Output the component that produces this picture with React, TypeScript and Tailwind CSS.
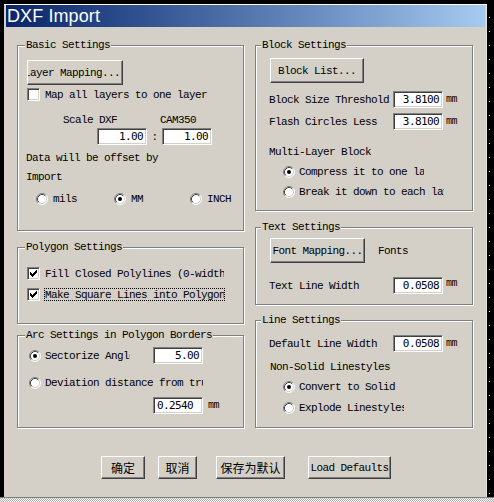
import React from "react";

const T =
  "font-['Liberation_Mono',monospace] text-[11px] tracking-[-0.6px] text-black leading-[12px] whitespace-nowrap";
const N =
  "font-['DejaVu_Sans_Mono',monospace] text-[11px] tracking-[-0.6px] text-black leading-[12px] whitespace-nowrap";
const CJK =
  "font-['Noto_Sans_CJK_SC','Noto_Sans_CJK_JP',sans-serif] text-[12px] leading-[14px] text-black whitespace-nowrap";

function Group({
  cls,
  legend,
  legendCls,
  children,
}: {
  cls: string;
  legend: string;
  legendCls: string;
  children?: React.ReactNode;
}) {
  return (
    <div
      className={`relative shrink-0 border border-[#808080] shadow-[inset_1px_1px_0_#fff,1px_1px_0_#fff] ${cls}`}
    >
      <span className={`absolute top-[-7px] px-[1px] bg-[#d4d0c8] ${T} ${legendCls}`}>
        {legend}
      </span>
      {children}
    </div>
  );
}

function Check({ checked }: { checked?: boolean }) {
  return (
    <span className="w-[13px] h-[13px] shrink-0 bg-white border border-t-[#808080] border-l-[#808080] border-b-white border-r-white shadow-[inset_1px_1px_0_#404040,inset_-1px_-1px_0_#d4d0c8] flex items-center justify-center">
      {checked && (
        <svg width="7" height="7" viewBox="0 0 7 7" shapeRendering="crispEdges">
          <rect x="0" y="2" width="1" height="3" fill="#000" />
          <rect x="1" y="3" width="1" height="3" fill="#000" />
          <rect x="2" y="4" width="1" height="3" fill="#000" />
          <rect x="3" y="3" width="1" height="3" fill="#000" />
          <rect x="4" y="2" width="1" height="3" fill="#000" />
          <rect x="5" y="1" width="1" height="3" fill="#000" />
          <rect x="6" y="0" width="1" height="3" fill="#000" />
        </svg>
      )}
    </span>
  );
}

function Radio({ checked, cls = "" }: { checked?: boolean; cls?: string }) {
  return (
    <svg width="12" height="12" viewBox="0 0 12 12" className={`block shrink-0 ${cls}`}>
      <circle cx="6" cy="6" r="5" fill="#fff" />
      <path d="M2.11 9.89A5.5 5.5 0 0 1 9.89 2.11" stroke="#808080" fill="none" />
      <path d="M9.89 2.11A5.5 5.5 0 0 1 2.11 9.89" stroke="#fff" fill="none" />
      <path d="M2.82 9.18A4.5 4.5 0 0 1 9.18 2.82" stroke="#404040" fill="none" />
      <path d="M9.18 2.82A4.5 4.5 0 0 1 2.82 9.18" stroke="#d4d0c8" fill="none" />
      {checked && <circle cx="6" cy="6" r="2" fill="#000" />}
    </svg>
  );
}

function Field({ v, cls }: { v: string; cls: string }) {
  return (
    <div
      className={`h-[17px] shrink-0 bg-white border border-t-[#808080] border-l-[#808080] border-b-white border-r-white shadow-[inset_1px_1px_0_#404040,inset_-1px_-1px_0_#d4d0c8] flex items-center ${N} ${cls}`}
    >
      {v}
    </div>
  );
}

function Btn({ children, cls }: { children: React.ReactNode; cls: string }) {
  return (
    <div
      className={`shrink-0 border border-t-white border-l-white border-b-[#404040] border-r-[#404040] shadow-[inset_-1px_-1px_0_#808080] bg-[#d4d0c8] flex items-center overflow-hidden ${cls}`}
    >
      {children}
    </div>
  );
}

function Mm({ cls }: { cls: string }) {
  return (
    <span
      className={`block font-['Liberation_Mono',monospace] text-[10px] tracking-[-0.5px] leading-[12px] text-[#000000] ${cls}`}
    >
      mm
    </span>
  );
}

export default function App() {
  return (
    <div className="w-[494px] h-[502px] bg-black flex flex-col overflow-hidden">
      <div className="flex h-[497px] pt-[4px] pl-[4px]">
        {/* window */}
        <div className="w-[483px] h-[493px] bg-[#d4d0c8] border-t border-t-white border-r border-r-[#e4e2dc] pl-[2px] pr-[1px] flex flex-col">
          {/* title bar */}
          <div className="h-[22px] shrink-0 bg-gradient-to-r from-[#0a246a] to-[#a6caf0] flex items-center pl-[1px]">
            <span className="font-['Liberation_Sans',Arial,sans-serif] text-[18px] leading-[20px] text-white tracking-[0.1px]">
              DXF Import
            </span>
          </div>

          {/* body */}
          <div className="flex pl-[11px] mt-[18px]">
            {/* left column */}
            <div className="flex flex-col w-[227px]">
              <Group cls="h-[186px]" legend="Basic Settings" legendCls="left-[7px]">
                <div className="flex flex-col pl-[9px] pt-[14px]">
                  <Btn cls="w-[96px] h-[25px] justify-end pr-[2px]">
                    <span className={T}>Layer Mapping...</span>
                  </Btn>
                  <div className="mt-[3px] h-[13px] flex items-center">
                    <Check />
                    <span className={`ml-[5px] ${T}`}>Map all layers to one layer</span>
                  </div>
                  <div className="mt-[13px] h-[12px] flex items-center">
                    <span className={`ml-[36px] ${T}`}>Scale DXF</span>
                    <span className={`ml-[43px] ${T}`}>CAM350</span>
                  </div>
                  <div className="mt-[2px] flex items-center">
                    <Field v="1.00" cls="ml-[70px] w-[50px] justify-end pr-[3px]" />
                    <span className={`w-[15px] text-center ${T}`}>:</span>
                    <Field v="1.00" cls="w-[50px] justify-end pr-[3px]" />
                  </div>
                  <div className="mt-[7px] h-[12px] flex items-center -ml-[1px]">
                    <span className={T}>Data will be offset by</span>
                  </div>
                  <div className="mt-[7px] h-[12px] flex items-center -ml-[1px]">
                    <span className={T}>Import</span>
                  </div>
                  <div className="mt-[10px] h-[12px] flex items-center">
                    <Radio cls="ml-[9px]" />
                    <span className={`ml-[5px] w-[24px] ${T}`}>mils</span>
                    <Radio checked cls="ml-[37px]" />
                    <span className={`ml-[5px] w-[12px] ${T}`}>MM</span>
                    <Radio cls="ml-[47px]" />
                    <span className={`ml-[5px] ${T}`}>INCH</span>
                  </div>
                </div>
              </Group>

              <Group cls="h-[77px] mt-[16px]" legend="Polygon Settings" legendCls="left-[7px]">
                <div className="flex flex-col pl-[9px] pt-[19px]">
                  <div className="h-[13px] flex items-center">
                    <Check checked />
                    <span className={`ml-[5px] w-[179px] overflow-hidden ${T}`}>
                      Fill Closed Polylines (0-width)
                    </span>
                  </div>
                  <div className="mt-[8px] h-[13px] flex items-center">
                    <Check checked />
                    <span
                      className={`ml-[4px] w-[181px] h-[13px] border border-dotted border-black overflow-hidden ${T} leading-[11px]`}
                    >
                      Make Square Lines into Polygons
                    </span>
                  </div>
                </div>
              </Group>

              <Group cls="h-[93px] mt-[11px]" legend="Arc Settings in Polygon Borders" legendCls="left-[7px]">
                <div className="flex flex-col pl-[9px] pt-[11px]">
                  <div className="h-[17px] flex items-center">
                    <Radio checked cls="ml-[2px]" />
                    <span className={`ml-[4px] w-[85px] overflow-hidden ${T}`}>Sectorize Angle</span>
                    <Field v="5.00" cls="ml-[23px] w-[50px] justify-end pr-[3px]" />
                  </div>
                  <div className="mt-[13px] h-[12px] flex items-center">
                    <Radio cls="ml-[2px]" />
                    <span className={`ml-[4px] w-[158px] overflow-hidden ${T}`}>
                      Deviation distance from true
                    </span>
                  </div>
                  <div className="mt-[8px] h-[17px] flex items-center">
                    <Field v="0.2540" cls="ml-[126px] w-[50px] justify-start pl-[3px]" />
                    <Mm cls="ml-[5px]" />
                  </div>
                </div>
              </Group>
            </div>

            {/* right column */}
            <div className="flex flex-col w-[218px] ml-[11px]">
              <Group cls="h-[166px]" legend="Block Settings" legendCls="left-[5px]">
                <div className="flex flex-col pl-[13px] pt-[12px]">
                  <Btn cls="ml-[1px] w-[94px] h-[25px] justify-center">
                    <span className={T}>Block List...</span>
                  </Btn>
                  <div className="mt-[8px] h-[17px] flex items-center">
                    <span className={`w-[124px] ${T}`}>Block Size Threshold</span>
                    <Field v="3.8100" cls="w-[50px] justify-end pr-[3px]" />
                    <Mm cls="ml-[3px]" />
                  </div>
                  <div className="mt-[5px] h-[17px] flex items-center">
                    <span className={`w-[124px] ${T}`}>Flash Circles Less</span>
                    <Field v="3.8100" cls="w-[50px] justify-end pr-[3px]" />
                    <Mm cls="ml-[3px]" />
                  </div>
                  <div className="mt-[16px] h-[12px] flex items-center">
                    <span className={T}>Multi-Layer Block</span>
                  </div>
                  <div className="mt-[8px] h-[12px] flex items-center">
                    <Radio checked cls="ml-[14px]" />
                    <span className={`ml-[4px] w-[125px] overflow-hidden ${T}`}>
                      Compress it to one layer
                    </span>
                  </div>
                  <div className="mt-[8px] h-[12px] flex items-center">
                    <Radio cls="ml-[14px]" />
                    <span className={`ml-[4px] w-[145px] overflow-hidden ${T}`}>
                      Break it down to each layer
                    </span>
                  </div>
                </div>
              </Group>

              <Group cls="h-[78px] mt-[16px]" legend="Text Settings" legendCls="left-[5px]">
                <div className="flex flex-col pl-[13px] pt-[10px]">
                  <div className="h-[25px] flex items-center">
                    <Btn cls="ml-[1px] w-[95px] h-[25px] justify-center">
                      <span className={T}>Font Mapping...</span>
                    </Btn>
                    <span className={`ml-[13px] ${T}`}>Fonts</span>
                  </div>
                  <div className="mt-[14px] h-[17px] flex items-center">
                    <span className={`w-[124px] ${T}`}>Text Line Width</span>
                    <Field v="0.0508" cls="w-[50px] justify-end pr-[3px]" />
                    <Mm cls="ml-[3px] -mt-[3px]" />
                  </div>
                </div>
              </Group>

              <Group cls="h-[108px] mt-[15px]" legend="Line Settings" legendCls="left-[5px]">
                <div className="flex flex-col pl-[13px] pt-[14px]">
                  <div className="h-[17px] flex items-center">
                    <span className={`w-[124px] ${T}`}>Default Line Width</span>
                    <Field v="0.0508" cls="w-[50px] justify-end pr-[3px]" />
                    <Mm cls="ml-[3px]" />
                  </div>
                  <div className="mt-[9px] h-[12px] flex items-center">
                    <span className={`ml-[1px] ${T}`}>Non-Solid Linestyles</span>
                  </div>
                  <div className="mt-[8px] h-[12px] flex items-center">
                    <Radio checked cls="ml-[14px]" />
                    <span className={`ml-[4px] ${T}`}>Convert to Solid</span>
                  </div>
                  <div className="mt-[9px] h-[12px] flex items-center">
                    <Radio cls="ml-[14px]" />
                    <span className={`ml-[4px] w-[105px] overflow-hidden ${T}`}>
                      Explode Linestyles
                    </span>
                  </div>
                </div>
              </Group>
            </div>
          </div>

          {/* bottom buttons */}
          <div className="flex mt-[28px] pl-[95px]">
            <Btn cls="w-[44px] h-[23px] justify-center">
              <span className={CJK}>确定</span>
            </Btn>
            <Btn cls="ml-[13px] w-[39px] h-[23px] justify-center">
              <span className={CJK}>取消</span>
            </Btn>
            <Btn cls="ml-[19px] w-[69px] h-[23px] justify-center">
              <span className={CJK}>保存为默认</span>
            </Btn>
            <Btn cls="ml-[23px] w-[83px] h-[23px] justify-center">
              <span className={T}>Load Defaults</span>
            </Btn>
          </div>
        </div>
        {/* right black strip with dots */}
        <div className="w-[7px] h-full flex">
          <div className="ml-[2px] w-[1px] h-full bg-[image:repeating-linear-gradient(to_bottom,transparent_0_13px,#ffffff_13px_14px)]" />
        </div>
      </div>
      <div className="h-[1px] bg-[#808080]" />
      <div className="flex-1 bg-[image:repeating-conic-gradient(#f4f4f4_0_25%,#b0b0b0_0_50%)] bg-[length:2px_2px]" />
    </div>
  );
}
